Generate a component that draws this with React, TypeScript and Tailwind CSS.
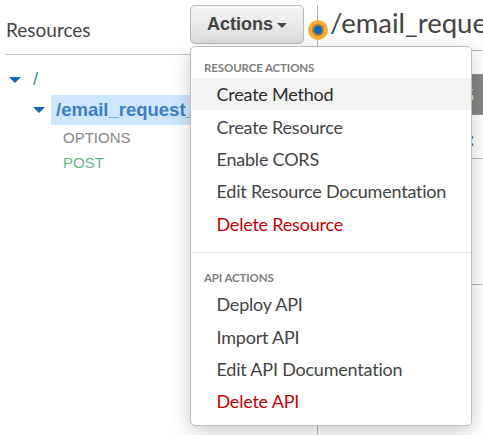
import React from "react";

const lato = "font-['Lato',sans-serif]";
const arial = "font-['Liberation_Sans',Arial,sans-serif]";

function Caret({ className }: { className: string }) {
  return (
    <svg className={className} viewBox="0 0 12 6" preserveAspectRatio="none">
      <path d="M0 0H12L6 6Z" fill="currentColor" />
    </svg>
  );
}

function MenuHeader({ children }: { children: React.ReactNode }) {
  return (
    <div className="flex h-[21px] items-center pl-[12px] text-[11.5px] font-bold tracking-[-0.12px] text-[#808080]">
      {children}
    </div>
  );
}

function MenuItem({ label, active, danger }: { label: string; active?: boolean; danger?: boolean }) {
  return (
    <div
      className={`flex h-[32.4px] items-center pl-[24.5px] pt-px text-[18px] tracking-[-0.21px] ${
        active ? "bg-[#f4f4f4]" : ""
      } ${danger ? "text-[#cc0000]" : active ? "text-[#2c2c2c]" : "text-[#444]"}`}
    >
      {label}
    </div>
  );
}

function ActionsMenu() {
  return (
    <div className="absolute left-0 top-[41px] h-[380px] w-[282px] rounded-[5px] border border-[#bdbdbd] bg-white pl-px pt-[10px] shadow-[0_6px_20px_rgba(0,0,0,0.2)]">
      <MenuHeader>RESOURCE ACTIONS</MenuHeader>
      <MenuItem label="Create Method" active />
      <MenuItem label="Create Resource" />
      <MenuItem label="Enable CORS" />
      <MenuItem label="Edit Resource Documentation" />
      <MenuItem label="Delete Resource" danger />
      <div className="mb-[14px] mt-[12px] h-px bg-[#e0e0e0]" />
      <MenuHeader>API ACTIONS</MenuHeader>
      <MenuItem label="Deploy API" />
      <MenuItem label="Import API" />
      <MenuItem label="Edit API Documentation" />
      <MenuItem label="Delete API" danger />
    </div>
  );
}

export default function App() {
  return (
    <div className={`flex h-[435px] w-[483px] overflow-hidden bg-white pt-[5px] whitespace-nowrap ${lato}`}>
      <aside className="relative z-10 w-[318px] shrink-0 border-r border-[#b4b4b4] pl-[6px]">
        <header className="flex h-[50px] border-b border-[#c0c0c0]">
          <h2 className="w-[184px] pt-[11px] text-[19px] leading-[28px] text-[#444]">Resources</h2>
          <div className="relative z-20 h-[39px] w-[114px]">
            <button
              className={`flex h-[39px] w-[114px] items-center justify-center gap-[4px] rounded-[5px] border border-[#b8b8b8] bg-linear-to-b from-[#f6f6f6] to-[#dcdcdc] text-[18px] font-bold text-[#444] ${arial}`}
            >
              Actions
              <Caret className="mt-[2px] h-[5px] w-[10px]" />
            </button>
            <ActionsMenu />
          </div>
        </header>
        <nav className={`pt-[9px] ${arial}`}>
          <div className="flex h-[31px] items-center pl-[3px] text-[18px] text-[#3d7fc4]">
            <Caret className="h-[6px] w-[12px] text-[#1166bb]" />
            <span className="ml-[12px]">/</span>
          </div>
          <div className="flex h-[30px] items-center pl-[27px]">
            <Caret className="h-[6px] w-[12px] text-[#1166bb]" />
            <span className="ml-[6px] h-[30px] flex-1 bg-[#cfe6ff] pl-[5px] text-[18.5px] font-bold leading-[29px] text-[#3d7fc4]">
              /email_request_
            </span>
          </div>
          <div className="flex h-[25px] items-center pl-[57px] pt-[2px] text-[15px] text-[#888]">OPTIONS</div>
          <div className="flex h-[25px] items-center pl-[57px] pt-[2px] text-[15px] text-[#66b985]">POST</div>
        </nav>
        <span className="absolute -right-[11px] top-[14.5px] flex size-[20px] items-center justify-center rounded-full bg-[#ffaa33]">
          <span className="size-[12px] rounded-full border-2 border-[#a17f3e] bg-[#1166bb]" />
        </span>
      </aside>
      <main className="min-w-0 flex-1 overflow-hidden">
        <h1 className="h-[46px] border-b border-[#b8b8b8] pl-[12px] text-[27.5px] leading-[35px] text-[#444]">
          /email_request_
        </h1>
        <div className="mt-[23px] flex h-[41px] items-center justify-end border-y border-[#999] bg-[#858585] pr-[9px] pt-px text-[19px] font-bold text-[#f1dfb4]">
          OPTIONS
        </div>
        <div className="flex h-[44px] items-center justify-end border-b border-[#b8b8b8] pr-[9px] pt-[5px] text-[18px] font-bold text-[#1166bb]">
          :
        </div>
        <div className="h-[126px] border-b border-[#b8b8b8]" />
      </main>
    </div>
  );
}
